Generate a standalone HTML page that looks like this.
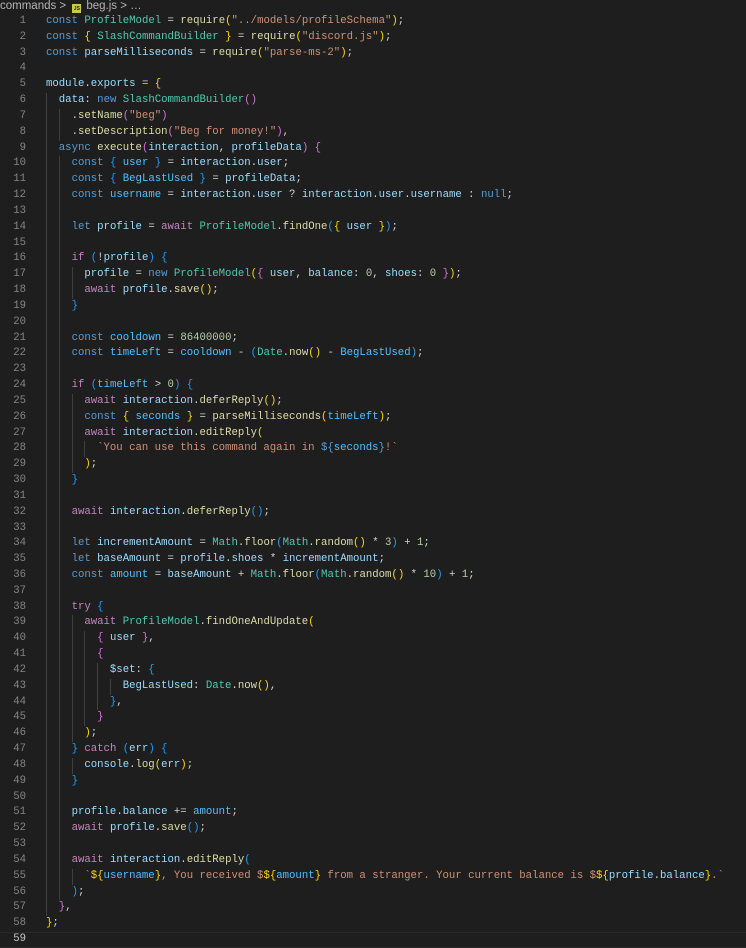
<!DOCTYPE html>
<html><head><meta charset="utf-8"><style>
html,body{margin:0;padding:0;background:#1e1e1e;width:746px;height:948px;overflow:hidden}
.bc{position:absolute;left:0;top:0;height:14px;font:11.5px "Liberation Sans",sans-serif;color:#b5b5b5;line-height:13px;white-space:nowrap}
.bc .i{display:inline-block;width:9px;height:9px;background:#cbcb41;color:#1e1e1e;font-size:5px;line-height:11px;text-align:center;font-weight:bold;vertical-align:-1px;margin:0 5px 0 3px}
.ed{position:absolute;left:0;top:14px;width:746px;font:10.67px "Liberation Mono",monospace;line-height:15.83px;color:#d4d4d4}
.l{height:15.83px;white-space:pre;position:relative}
.n{display:inline-block;width:26px;text-align:right;color:#858585;margin-right:20px}
.cur{box-shadow:inset 0 1px #282828,inset 0 -1px #282828}
.cur .n{color:#c6c6c6}
.g{display:inline-block;width:2ch;box-shadow:inset 1px 0 #404040}
.k{color:#569cd6}.c{color:#c586c0}.s{color:#ce9178}.f{color:#dcdcaa}.v{color:#9cdcfe}.t{color:#4ec9b0}.m{color:#b5cea8}.o{color:#4fc1ff}
.b1{color:#ffd700}.b2{color:#da70d6}.b3{color:#179fff}
</style></head><body>
<div class="bc">commands &gt; <span class="i">JS</span>beg.js &gt; …</div>
<div class="ed">
<div class="l"><span class="n">1</span><span class="k">const</span> <span class="t">ProfileModel</span> = <span class="f">require</span><span class="b1">(</span><span class="s">"../models/profileSchema"</span><span class="b1">)</span>;</div>
<div class="l"><span class="n">2</span><span class="k">const</span> <span class="b1">{</span> <span class="t">SlashCommandBuilder</span> <span class="b1">}</span> = <span class="f">require</span><span class="b1">(</span><span class="s">"discord.js"</span><span class="b1">)</span>;</div>
<div class="l"><span class="n">3</span><span class="k">const</span> <span class="v">parseMilliseconds</span> = <span class="f">require</span><span class="b1">(</span><span class="s">"parse-ms-2"</span><span class="b1">)</span>;</div>
<div class="l"><span class="n">4</span></div>
<div class="l"><span class="n">5</span><span class="v">module</span>.<span class="v">exports</span> = <span class="b1">{</span></div>
<div class="l"><span class="n">6</span><span class="g">  </span><span class="v">data</span>: <span class="k">new</span> <span class="t">SlashCommandBuilder</span><span class="b2">()</span></div>
<div class="l"><span class="n">7</span><span class="g">  </span><span class="g">  </span>.<span class="f">setName</span><span class="b2">(</span><span class="s">"beg"</span><span class="b2">)</span></div>
<div class="l"><span class="n">8</span><span class="g">  </span><span class="g">  </span>.<span class="f">setDescription</span><span class="b2">(</span><span class="s">"Beg for money!"</span><span class="b2">)</span>,</div>
<div class="l"><span class="n">9</span><span class="g">  </span><span class="k">async</span> <span class="f">execute</span><span class="b2">(</span><span class="v">interaction</span>, <span class="v">profileData</span><span class="b2">)</span> <span class="b2">{</span></div>
<div class="l"><span class="n">10</span><span class="g">  </span><span class="g">  </span><span class="k">const</span> <span class="b3">{</span> <span class="o">user</span> <span class="b3">}</span> = <span class="v">interaction</span>.<span class="v">user</span>;</div>
<div class="l"><span class="n">11</span><span class="g">  </span><span class="g">  </span><span class="k">const</span> <span class="b3">{</span> <span class="o">BegLastUsed</span> <span class="b3">}</span> = <span class="v">profileData</span>;</div>
<div class="l"><span class="n">12</span><span class="g">  </span><span class="g">  </span><span class="k">const</span> <span class="o">username</span> = <span class="v">interaction</span>.<span class="v">user</span> ? <span class="v">interaction</span>.<span class="v">user</span>.<span class="v">username</span> : <span class="k">null</span>;</div>
<div class="l"><span class="n">13</span><span class="g">  </span><span class="g">  </span></div>
<div class="l"><span class="n">14</span><span class="g">  </span><span class="g">  </span><span class="k">let</span> <span class="v">profile</span> = <span class="c">await</span> <span class="t">ProfileModel</span>.<span class="f">findOne</span><span class="b3">(</span><span class="b1">{</span> <span class="v">user</span> <span class="b1">}</span><span class="b3">)</span>;</div>
<div class="l"><span class="n">15</span><span class="g">  </span><span class="g">  </span></div>
<div class="l"><span class="n">16</span><span class="g">  </span><span class="g">  </span><span class="c">if</span> <span class="b3">(</span>!<span class="v">profile</span><span class="b3">)</span> <span class="b3">{</span></div>
<div class="l"><span class="n">17</span><span class="g">  </span><span class="g">  </span><span class="g">  </span><span class="v">profile</span> = <span class="k">new</span> <span class="t">ProfileModel</span><span class="b1">(</span><span class="b2">{</span> <span class="v">user</span>, <span class="v">balance</span>: <span class="m">0</span>, <span class="v">shoes</span>: <span class="m">0</span> <span class="b2">}</span><span class="b1">)</span>;</div>
<div class="l"><span class="n">18</span><span class="g">  </span><span class="g">  </span><span class="g">  </span><span class="c">await</span> <span class="v">profile</span>.<span class="f">save</span><span class="b1">()</span>;</div>
<div class="l"><span class="n">19</span><span class="g">  </span><span class="g">  </span><span class="b3">}</span></div>
<div class="l"><span class="n">20</span><span class="g">  </span><span class="g">  </span></div>
<div class="l"><span class="n">21</span><span class="g">  </span><span class="g">  </span><span class="k">const</span> <span class="o">cooldown</span> = <span class="m">86400000</span>;</div>
<div class="l"><span class="n">22</span><span class="g">  </span><span class="g">  </span><span class="k">const</span> <span class="o">timeLeft</span> = <span class="o">cooldown</span> - <span class="b3">(</span><span class="t">Date</span>.<span class="f">now</span><span class="b1">()</span> - <span class="o">BegLastUsed</span><span class="b3">)</span>;</div>
<div class="l"><span class="n">23</span><span class="g">  </span><span class="g">  </span></div>
<div class="l"><span class="n">24</span><span class="g">  </span><span class="g">  </span><span class="c">if</span> <span class="b3">(</span><span class="o">timeLeft</span> &gt; <span class="m">0</span><span class="b3">)</span> <span class="b3">{</span></div>
<div class="l"><span class="n">25</span><span class="g">  </span><span class="g">  </span><span class="g">  </span><span class="c">await</span> <span class="v">interaction</span>.<span class="f">deferReply</span><span class="b1">()</span>;</div>
<div class="l"><span class="n">26</span><span class="g">  </span><span class="g">  </span><span class="g">  </span><span class="k">const</span> <span class="b1">{</span> <span class="o">seconds</span> <span class="b1">}</span> = <span class="f">parseMilliseconds</span><span class="b1">(</span><span class="o">timeLeft</span><span class="b1">)</span>;</div>
<div class="l"><span class="n">27</span><span class="g">  </span><span class="g">  </span><span class="g">  </span><span class="c">await</span> <span class="v">interaction</span>.<span class="f">editReply</span><span class="b1">(</span></div>
<div class="l"><span class="n">28</span><span class="g">  </span><span class="g">  </span><span class="g">  </span><span class="g">  </span><span class="s">`You can use this command again in </span><span class="k">${</span><span class="o">seconds</span><span class="k">}</span><span class="s">!`</span></div>
<div class="l"><span class="n">29</span><span class="g">  </span><span class="g">  </span><span class="g">  </span><span class="b1">)</span>;</div>
<div class="l"><span class="n">30</span><span class="g">  </span><span class="g">  </span><span class="b3">}</span></div>
<div class="l"><span class="n">31</span><span class="g">  </span><span class="g">  </span></div>
<div class="l"><span class="n">32</span><span class="g">  </span><span class="g">  </span><span class="c">await</span> <span class="v">interaction</span>.<span class="f">deferReply</span><span class="b3">()</span>;</div>
<div class="l"><span class="n">33</span><span class="g">  </span><span class="g">  </span></div>
<div class="l"><span class="n">34</span><span class="g">  </span><span class="g">  </span><span class="k">let</span> <span class="v">incrementAmount</span> = <span class="t">Math</span>.<span class="f">floor</span><span class="b3">(</span><span class="t">Math</span>.<span class="f">random</span><span class="b1">()</span> * <span class="m">3</span><span class="b3">)</span> + <span class="m">1</span>;</div>
<div class="l"><span class="n">35</span><span class="g">  </span><span class="g">  </span><span class="k">let</span> <span class="v">baseAmount</span> = <span class="v">profile</span>.<span class="v">shoes</span> * <span class="v">incrementAmount</span>;</div>
<div class="l"><span class="n">36</span><span class="g">  </span><span class="g">  </span><span class="k">const</span> <span class="o">amount</span> = <span class="v">baseAmount</span> + <span class="t">Math</span>.<span class="f">floor</span><span class="b3">(</span><span class="t">Math</span>.<span class="f">random</span><span class="b1">()</span> * <span class="m">10</span><span class="b3">)</span> + <span class="m">1</span>;</div>
<div class="l"><span class="n">37</span><span class="g">  </span><span class="g">  </span></div>
<div class="l"><span class="n">38</span><span class="g">  </span><span class="g">  </span><span class="c">try</span> <span class="b3">{</span></div>
<div class="l"><span class="n">39</span><span class="g">  </span><span class="g">  </span><span class="g">  </span><span class="c">await</span> <span class="t">ProfileModel</span>.<span class="f">findOneAndUpdate</span><span class="b1">(</span></div>
<div class="l"><span class="n">40</span><span class="g">  </span><span class="g">  </span><span class="g">  </span><span class="g">  </span><span class="b2">{</span> <span class="v">user</span> <span class="b2">}</span>,</div>
<div class="l"><span class="n">41</span><span class="g">  </span><span class="g">  </span><span class="g">  </span><span class="g">  </span><span class="b2">{</span></div>
<div class="l"><span class="n">42</span><span class="g">  </span><span class="g">  </span><span class="g">  </span><span class="g">  </span><span class="g">  </span><span class="v">$set</span>: <span class="b3">{</span></div>
<div class="l"><span class="n">43</span><span class="g">  </span><span class="g">  </span><span class="g">  </span><span class="g">  </span><span class="g">  </span><span class="g">  </span><span class="v">BegLastUsed</span>: <span class="t">Date</span>.<span class="f">now</span><span class="b1">()</span>,</div>
<div class="l"><span class="n">44</span><span class="g">  </span><span class="g">  </span><span class="g">  </span><span class="g">  </span><span class="g">  </span><span class="b3">}</span>,</div>
<div class="l"><span class="n">45</span><span class="g">  </span><span class="g">  </span><span class="g">  </span><span class="g">  </span><span class="b2">}</span></div>
<div class="l"><span class="n">46</span><span class="g">  </span><span class="g">  </span><span class="g">  </span><span class="b1">)</span>;</div>
<div class="l"><span class="n">47</span><span class="g">  </span><span class="g">  </span><span class="b3">}</span> <span class="c">catch</span> <span class="b3">(</span><span class="v">err</span><span class="b3">)</span> <span class="b3">{</span></div>
<div class="l"><span class="n">48</span><span class="g">  </span><span class="g">  </span><span class="g">  </span><span class="v">console</span>.<span class="f">log</span><span class="b1">(</span><span class="v">err</span><span class="b1">)</span>;</div>
<div class="l"><span class="n">49</span><span class="g">  </span><span class="g">  </span><span class="b3">}</span></div>
<div class="l"><span class="n">50</span><span class="g">  </span><span class="g">  </span></div>
<div class="l"><span class="n">51</span><span class="g">  </span><span class="g">  </span><span class="v">profile</span>.<span class="v">balance</span> += <span class="o">amount</span>;</div>
<div class="l"><span class="n">52</span><span class="g">  </span><span class="g">  </span><span class="c">await</span> <span class="v">profile</span>.<span class="f">save</span><span class="b3">()</span>;</div>
<div class="l"><span class="n">53</span><span class="g">  </span><span class="g">  </span></div>
<div class="l"><span class="n">54</span><span class="g">  </span><span class="g">  </span><span class="c">await</span> <span class="v">interaction</span>.<span class="f">editReply</span><span class="b3">(</span></div>
<div class="l"><span class="n">55</span><span class="g">  </span><span class="g">  </span><span class="g">  </span><span class="s">`</span><span class="b1">${</span><span class="o">username</span><span class="b1">}</span><span class="s">, You received $</span><span class="b1">${</span><span class="o">amount</span><span class="b1">}</span><span class="s"> from a stranger. Your current balance is $</span><span class="b1">${</span><span class="v">profile</span>.<span class="v">balance</span><span class="b1">}</span><span class="s">.`</span></div>
<div class="l"><span class="n">56</span><span class="g">  </span><span class="g">  </span><span class="b3">)</span>;</div>
<div class="l"><span class="n">57</span><span class="g">  </span><span class="b2">}</span>,</div>
<div class="l"><span class="n">58</span><span class="b1">}</span>;</div>
<div class="l cur"><span class="n">59</span></div>
</div>
</body></html>
